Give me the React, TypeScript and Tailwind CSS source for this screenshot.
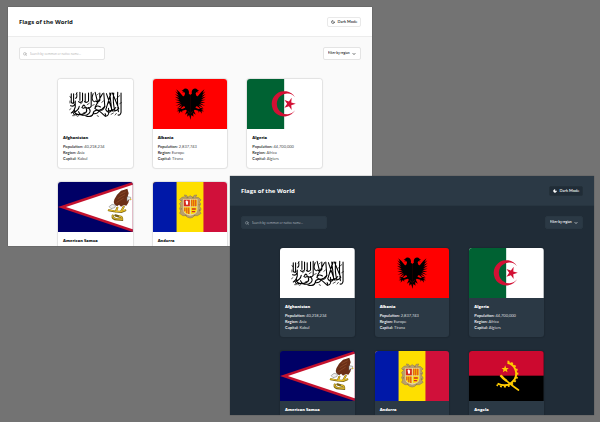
import type { ReactNode } from "react";
import { ChevronDown, Moon, Search } from "lucide-react";

type Country = {
  name: string;
  population?: string;
  region?: string;
  capital?: string;
  flag: ReactNode;
};

function FlagFrame({ label, children }: { label: string; children: ReactNode }) {
  return (
    <svg
      viewBox="0 0 225 150"
      preserveAspectRatio="none"
      role="img"
      aria-label={label}
      className="block h-[50px] w-full"
    >
      {children}
    </svg>
  );
}

const afghanistan = (
  <FlagFrame label="Flag of Afghanistan">
    <rect width="225" height="150" fill="#fff" />
    <g fill="none" stroke="#000" strokeWidth="3.2" strokeLinecap="round">
      <path d="M190 42v58q-2 10-9 8M180 40q-2 34 2 58M164 42l19 46q-12 14-22 4M172 96q-8-24-4-54" />
      <path d="M160 42l-16 50q8 14 18 2l-6-52M146 44l18 52M138 42l3 40q-6 16-14 10" />
      <path d="M134 44l-22 40M126 42v22q-6 8-13 2M112 40l8 32M106 44q-8 20 4 24" />
      <path d="M142 104q8 16-6 2t-20-12q-10 2-10 10q12 2 18-8M106 104q-4 12-22 7" />
      <path d="M100 40v42q-6 8-14 4M92 42v24q-5 7-12 2M82 44v26M74 42v24q-6 7-12 2M66 40v24M56 42q3 14-3 16" />
      <path d="M40 44v26q3 6 7 0V44M38 80q10 4 12-4M52 66v18q-4 14-12 18" />
      <path d="M92 86q12 14-6 22q-18 4-24-10M84 86q10 18-18 21q-18 0-16-14M64 82q-2 12-16 18q-4 8 8 8M74 82q6-8 8 2q-4 7-10 1" />
      <path d="M128 84q-12-8-17 4q10 10 20 4l10-10M152 88q4 18-4 22M174 86q-10 10-24 10" />
    </g>
    <g fill="none" stroke="#000" strokeWidth="2" strokeLinecap="round">
      <path d="M36 52l2 4M36 66v6M54 46l4-5M68 74l5-3M88 77l6-4M104 79l5-2M118 48l4-4M132 70l5-4M150 74l4-3M154 54l5-4M174 62l4-4M186 74l5-3M186 50l-5 4M44 110h5M58 112l4-2M98 112l5-2M118 110l4 2M160 106l7-4M172 108l4-5M35 92l4-3M46 74l4-3M76 102l5-2" />
    </g>
  </FlagFrame>
);

const eagleHalf =
  "M113 48L108 44Q110 33 102 29Q95 27 91 32L86 35L93 36L87 40L95 40Q98 43 95 49Q92 54 89 50Q82 40 70 31L76 43L67 37L78 50L66 45L79 56L66 53L80 62L66 62L82 67L67 72L84 71L68 81L86 75L73 88L88 79L80 91L92 82Q96 80 97 86L88 90L79 87L72 90L80 92L71 97L79 97L77 104L84 96L88 101L88 95L99 92L102 95L96 107L104 102L103 113L109 108L113 122Z";

const albania = (
  <FlagFrame label="Flag of Albania">
    <rect width="225" height="150" fill="#f00" />
    <g fill="#000">
      <path d={eagleHalf} />
      <path d={eagleHalf} transform="matrix(-1 0 0 1 225 0)" />
    </g>
    <g stroke="#f00" strokeWidth="1" fill="none">
      <path d="M106 97l4 6M119 97l-4 6" />
    </g>
  </FlagFrame>
);

const algeria = (
  <FlagFrame label="Flag of Algeria">
    <rect width="225" height="150" fill="#fff" />
    <rect width="112" height="150" fill="#006233" />
    <path
      fill="#d21034"
      d="M145 55A38 38 0 1 0 145 94A31 31 0 1 1 145 55ZM147 74.5L133.400 78.700L134.600 92.900L126.300 81.400L112.900 86L121 74.500L112.900 63L126.300 67.600L134.600 56.100L133.400 70.300Z"
    />
  </FlagFrame>
);

const americanSamoa = (
  <FlagFrame label="Flag of American Samoa">
    <rect width="225" height="150" fill="#006" />
    <path fill="#c4122e" d="M0 75L225 0V150Z" />
    <path fill="#fff" d="M24 75L225 8V142Z" />
    <path
      fill="#6b2f17"
      d="M209 20L200 23L190 26L184 32L178 38L174 45L170 52L168 60L170 67L178 73L184 68L190 74L198 69L206 71L212 62L215 50L210 43L213 34Z"
    />
    <path fill="none" stroke="#93502c" strokeWidth="2" d="M204 29L186 38M202 38L180 50M198 48L176 62" />
    <path fill="#eee" stroke="#666" strokeWidth="1.500" d="M208 44L219 46L219 54L213 53L208 58ZM163 67L154 74L160 80L171 77L174 70Z" />
    <path fill="#e8b923" d="M218 49l4 4-6 1z" />
    <g fill="none" strokeLinecap="round">
      <path stroke="#7b6413" strokeWidth="6" d="M153 85L169 88L191 90L203 85M179 77L174 89M198 74L191 87" />
      <path stroke="#e5bd27" strokeWidth="3.500" d="M152 84L169 87L190 89L203 84M179 77L174 89M198 74L191 87" />
      <path stroke="#796213" strokeWidth="7" d="M165 101Q163 111 178 112L193 113Q194 103 185 104L173 100" />
      <path stroke="#e1bb2b" strokeWidth="3.500" d="M165 100Q163 110 178 111L193 112Q194 103 185 103" />
    </g>
  </FlagFrame>
);

const andorra = (
  <FlagFrame label="Flag of Andorra">
    <rect width="225" height="150" fill="#d0103a" />
    <rect width="152" height="150" fill="#fedf00" />
    <rect width="71" height="150" fill="#0018a8" />
    <path
      fill="#b9a06c"
      stroke="#9a8050"
      strokeWidth="2"
      d="M99 44L94 39L101 40L105 46L112 41L120 46L124 40L132 39L128 46L138 47L145 54L139 59L144 66L140 73L145 81L141 89L145 94L134 101L125 101L120 106L112 108L104 106L99 101L90 101L80 94L84 87L80 80L84 72L80 65L86 58L80 53L87 46Z"
    />
    <path fill="#ead6a0" d="M91 51H134V82Q134 98 112 101Q91 98 91 82Z" />
    <path fill="#d52b1e" d="M93 53H111V73H93Z" />
    <path fill="#fedf00" d="M114 53H132V73H114ZM93 76H111V97Q94 95 93 84ZM114 76H132V84Q131 95 114 97Z" />
    <path stroke="#d52b1e" strokeWidth="3" d="M117 53V73M123 53V73M129 53V73M96 77V88M102 77V94M108 77V96" />
    <path fill="#fff" d="M98 58l4-3 4 4-1 9h-5z" />
    <path stroke="#d52b1e" strokeWidth="4" d="M117 81H129M117 89H127" />
    <path stroke="#7c6840" strokeWidth="2" d="M86 54l-2 3M139 66v4M85 78v5M140 82v5M101 47h5M118 47h5M97 99l5 3M127 99l-5 3" />
  </FlagFrame>
);

const angola = (
  <FlagFrame label="Flag of Angola">
    <rect width="225" height="150" fill="#000" />
    <rect width="225" height="74" fill="#cc092f" />
    <g fill="none" stroke="#ffcb00">
      <path strokeWidth="6" d="M116 35A34 34 0 0 1 137 86Q118 112 86 98" />
      <path strokeWidth="5" strokeDasharray="6 6" d="M116 31A38 38 0 0 1 140 89Q119 117 83 102" />
      <path strokeWidth="5" strokeLinecap="round" d="M97 74Q113 92 149 117" />
      <path strokeWidth="7" d="M95 73Q103 84 114 90" />
    </g>
    <path fill="#ffcb00" d="M109 43L112 51L120 51L114 56L116 64L109 59L102 64L104 56L98 51L106 51Z" />
  </FlagFrame>
);

const countries: Country[] = [
  { name: "Afghanistan", population: "40,218,234", region: "Asia", capital: "Kabul", flag: afghanistan },
  { name: "Albania", population: "2,837,743", region: "Europe", capital: "Tirana", flag: albania },
  { name: "Algeria", population: "44,700,000", region: "Africa", capital: "Algiers", flag: algeria },
  { name: "American Samoa", flag: americanSamoa },
  { name: "Andorra", flag: andorra },
  { name: "Angola", flag: angola },
];

const themes = {
  light: {
    window: "bg-[#fafafa] text-[#111517]",
    header: "bg-white border-[#ececec]",
    surface: "bg-white border-[#e4e4e4]",
    toggle: "bg-white border-[#e9e9e9]",
    placeholder: "placeholder:text-[#b0b0b0]",
    icon: "text-[#999999]",
    moon: "none",
  },
  dark: {
    window: "bg-[#202c37] text-white",
    header: "bg-[#2b3945] border-[#273540]",
    surface: "bg-[#2b3945] border-[#293742]",
    toggle: "bg-[#202c37] border-[#233039]",
    placeholder: "placeholder:text-[#b3bac0]",
    icon: "text-[#a7b0b7]",
    moon: "currentColor",
  },
};

function Detail({ term, value }: { term: string; value: string }) {
  return (
    <div className="flex gap-px">
      <dt className="font-semibold">{term}:</dt>
      <dd className="opacity-80">{value}</dd>
    </div>
  );
}

function Preview({ mode, place }: { mode: "light" | "dark"; place: string }) {
  const theme = themes[mode];
  return (
    <section
      aria-label={`Flags of the World, ${mode}`}
      className={`absolute h-[239px] overflow-hidden shadow-[0_0_1px_#444] ${place} ${theme.window}`}
    >
      <header className={`flex h-[30px] items-center justify-between border-b px-[11px] ${theme.header}`}>
        <h1 className="text-[6px] leading-[8px] font-bold">Flags of the World</h1>
        <button
          type="button"
          className={`flex h-[10px] w-[34px] items-center justify-center gap-[3px] rounded-[2px] border font-['Lato','Open_Sans',sans-serif] text-[4px] leading-[6px] font-medium whitespace-nowrap ${theme.toggle}`}
        >
          <Moon className="size-[4px]" strokeWidth={3} fill={theme.moon} />
          Dark Mode
        </button>
      </header>
      <div className="flex items-center justify-between px-[11px] pt-[10px]">
        <label className={`flex h-[13px] w-[86px] items-center gap-[3px] rounded-[2px] border px-[3px] ${theme.surface}`}>
          <Search className={`size-[4px] shrink-0 ${theme.icon}`} strokeWidth={3} />
          <input
            type="text"
            aria-label="Search countries"
            placeholder="Search by common or native name..."
            className={`w-full min-w-0 bg-transparent text-[3px] leading-[6px] outline-none ${theme.placeholder}`}
          />
        </label>
        <div className={`grid h-[13px] w-[38px] items-center rounded-[2px] border ${theme.surface}`}>
          <select
            aria-label="Filter by region"
            className="col-start-1 row-start-1 h-full w-full appearance-none bg-transparent pl-1 text-[3px] font-semibold outline-none"
          >
            <option>Filter by region</option>
          </select>
          <ChevronDown className="pointer-events-none col-start-1 row-start-1 mr-1 size-[4px] justify-self-end" strokeWidth={4} />
        </div>
      </div>
      <div className="grid grid-cols-3 gap-x-5 gap-y-[14px] px-[50px] pt-[19px]">
        {countries.map((country) => (
          <article
            key={country.name}
            className={`h-[89px] overflow-hidden rounded-[3px] shadow-[0_0_1px_1px_#0000001a] ${mode === "light" ? "bg-white" : "bg-[#2b3945]"}`}
          >
            {country.flag}
            <div className="px-[5px] pt-[6px]">
              <h2 className="text-[4px] leading-[6px] font-extrabold">{country.name}</h2>
              {country.population && country.region && country.capital && (
                <dl className="pt-[3px] font-['Lato','Open_Sans',sans-serif] text-[4px] leading-[6px]">
                  <Detail term="Population" value={country.population} />
                  <Detail term="Region" value={country.region} />
                  <Detail term="Capital" value={country.capital} />
                </dl>
              )}
            </div>
          </article>
        ))}
      </div>
    </section>
  );
}

export default function App() {
  return (
    <main className="relative min-h-screen overflow-hidden bg-[#737373] font-['Open_Sans','Noto_Sans',sans-serif]">
      <Preview mode="light" place="top-[7px] right-[228px] left-2" />
      <Preview mode="dark" place="top-[176px] right-[6px] left-[230px]" />
    </main>
  );
}
